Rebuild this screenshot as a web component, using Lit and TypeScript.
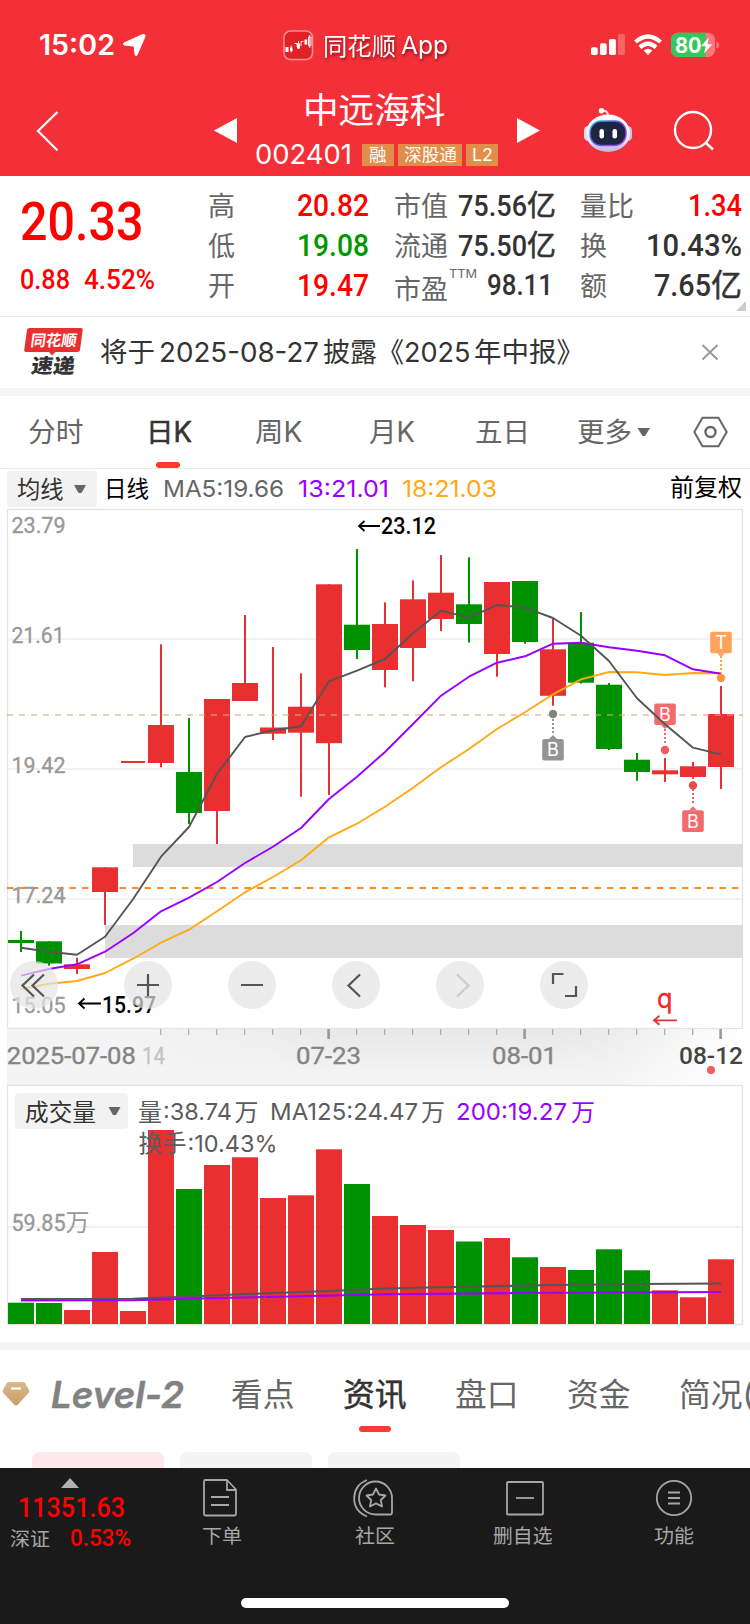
import { LitElement, html, svg, css } from "lit";
import { customElement } from "lit/decorators.js";

/* A single-line label with a fixed advance width: w wide, h tall, baseline at y. */
const label = (text: string, w: number, size: number, y: number, h: number, cls = "") => html`
  <svg class="label ${cls}" width=${w} height=${h} viewBox="0 0 ${w} ${h}">
    <text x="0" y=${y} font-size=${size} textLength=${w} lengthAdjust="spacingAndGlyphs">${text}</text>
  </svg>`;

/* The same kind of label, placed inside a drawing. */
const mark = (text: string, x: number, y: number, w: number, size: number, cls = "") => svg`
  <text class=${cls} x=${x} y=${y} font-size=${size} textLength=${w} lengthAdjust="spacingAndGlyphs">${text}</text>`;

const shared = css`
  svg { display: block; flex: none; overflow: visible; }
  text { fill: currentColor; font-family: Inter, "Noto Sans CJK SC", sans-serif; white-space: pre; }
  .din text, text.din { font-family: Roboto, "Noto Sans CJK SC", sans-serif; font-weight: 500; }
  .light text, text.light { font-weight: 400; stroke: currentColor; stroke-width: 0.35px; }
  .strong text, text.strong { stroke: currentColor; stroke-width: 0.55px; }
  .semi text { font-weight: 600; }
  .red { color: #ff0000; fill: #ff0000; }
  .green { color: #009900; }
  .dark { color: #333; }
  .mid { color: #666; }
  .gray { color: #999; }
  .black { color: #000; }
  .purple { color: #9900ff; }
  .amber { color: #ffaa11; }
  text.red { fill: #e93030; }
`;

const RED = "#e93030";
const GREEN = "#009100";
const cx = (i: number) => 21 + i * 28;

/* colour, body top, body bottom, high, low */
const candles: [string, number, number, number, number][] = [
  ["g", 940, 943, 931, 952], ["g", 941.3, 963.5, 941.3, 965.7], ["r", 964.3, 969, 957.7, 974],
  ["r", 867.3, 892, 867.3, 925], ["r", 761, 763, 761, 763], ["r", 725, 763, 644.3, 767.3],
  ["g", 772, 813, 718, 824], ["r", 699, 811, 699, 844], ["r", 683, 701, 615, 701],
  ["r", 727.5, 733.7, 647, 740], ["r", 706.7, 732.7, 673.3, 796.7], ["r", 584.3, 743.2, 584.3, 795],
  ["g", 624.7, 650, 549, 659], ["r", 624, 670, 602.3, 687.3], ["r", 599.3, 648, 580.3, 681.3],
  ["r", 592.7, 619, 555, 631], ["g", 604.3, 624, 557.3, 642.5], ["r", 582, 654, 582, 676.7],
  ["g", 581, 642, 581, 643.8], ["r", 649.3, 695.8, 618.3, 705.7], ["g", 642.7, 682.7, 612, 683.5],
  ["g", 684.7, 749, 683, 750], ["g", 759.7, 772, 753, 780.8], ["r", 770.3, 774.3, 758, 782],
  ["r", 766.3, 777, 762, 778], ["r", 714, 767, 686, 789],
];
const ma5 = [947.7, 951.7, 954.7, 936.7, 899.3, 856.7, 827, 774, 737, 730.3, 726.3, 681.3, 670.7, 659, 633.3, 610.7, 617.7, 605, 607.7, 618, 635.7, 661, 698.3, 724.3, 747.7, 754.3];
const ma13 = [975.7, 969, 964.3, 951.7, 933.3, 911.3, 897.7, 882, 863, 846.7, 828, 799, 776.7, 752, 724, 695.7, 676.7, 662.7, 656.3, 643.7, 642.7, 647.3, 650.7, 655.3, 669.3, 673.7];
const ma18 = [989, 983.7, 981, 973, 958.7, 942.7, 929.7, 911.3, 892.3, 877, 860.3, 837.3, 823.7, 806.7, 787.7, 767.3, 749, 729, 712.3, 694.3, 679.3, 672, 672.3, 675, 673, 673.3];
const volumes = [1302.7, 1303, 1310, 1252, 1311, 1130, 1189, 1165, 1157.3, 1198, 1195.3, 1149.3, 1184, 1216, 1225, 1230, 1241.5, 1238, 1257.3, 1267, 1270, 1249.3, 1270.3, 1290.3, 1297.3, 1259.3];

const path = (ys: number[]) => ys.map((y, i) => `${cx(i)},${y}`).join(" ");

@customElement("k-chart")
class KChart extends LitElement {
  static styles = [shared, css`
    :host { display: block; }
    .btn { fill: rgba(228, 228, 228, 0.7); }
    .glyph { fill: none; stroke: #555; stroke-width: 2.2; }
    .off { stroke: #ccc; }
    .ma { fill: none; stroke-width: 1.9; stroke-linejoin: round; }
    .stem { fill: none; stroke-width: 1.8; stroke-dasharray: 2 2; }
    .tag { fill: #fff; font-family: Inter, sans-serif; font-size: 18px; text-anchor: middle; }
  `];

  badge(x: number, y: number, letter: string, color: string, up: boolean) {
    return svg`
      <path d=${up ? `M${x - 4} ${y}l4-4 4 4z` : `M${x - 4} ${y + 21.5}l4 4 4-4z`} fill=${color}></path>
      <rect x=${x - 10.8} y=${y} width="21.6" height="21.6" rx="2" fill=${color}></rect>
      <text class="tag" x=${x} y=${y + 17.3}>${letter}</text>`;
  }

  render() {
    return html`<svg width="750" height="520" viewBox="0 509 750 520">
      <rect x="7.5" y="509.5" width="735" height="519" fill="#fff" stroke="#e3e3e3" stroke-width="1.3"></rect>
      ${[639, 769, 899].map((y) => svg`<rect x="8" y=${y - 1} width="734" height="2" fill="#f2f2f2"></rect>`)}
      <rect x="133" y="844" width="610" height="23" fill="#dcdcdc"></rect>
      <rect x="105" y="925" width="638" height="33" fill="#dcdcdc"></rect>
      <path d="M7 888H743" stroke="#ff8a1f" stroke-width="2" stroke-dasharray="6.4 6.1"></path>
      ${mark("23.79", 11.5, 532.7, 54, 22.8, "din gray light")}
      ${mark("21.61", 11.5, 642.7, 53, 22.8, "din gray light")}
      ${mark("19.42", 11.5, 772.7, 54, 22.8, "din gray light")}
      ${mark("17.24", 11.5, 902.7, 54, 22.8, "din gray light")}
      ${mark("15.05", 11.5, 1012.7, 54, 22.8, "din gray light")}
      ${candles.map(([k, t, b, hi, lo], i) => {
        const c = k === "r" ? RED : GREEN;
        const half = i === 4 ? 12 : 13;
        return svg`<rect x=${cx(i) - half} y=${t} width=${half * 2} height=${b - t} fill=${c}></rect>
          <rect x=${cx(i) - 1} y=${hi} width="2" height=${lo - hi} fill=${c}></rect>`;
      })}
      <path d="M7 715H743" stroke="#d3ac70" stroke-opacity=".55" stroke-width="1.9" stroke-dasharray="6 6"></path>
      <polyline class="ma" stroke="#ffaa11" points=${path(ma18)}></polyline>
      <polyline class="ma" stroke="#9900ff" points=${path(ma13)}></polyline>
      ${this.badge(665, 703.4, "B", "#f26c6e", false)}
      <path class="stem" d="M665 729V744" stroke="#f05a5c"></path>
      <circle cx="665" cy="750" r="4.2" fill="#f05a5c"></circle>
      <polyline class="ma" stroke="#555" points=${path(ma5)}></polyline>
      <circle cx="553" cy="714" r="4.2" fill="#828282"></circle>
      <path class="stem" d="M553 719V733" stroke="#888"></path>
      ${this.badge(553, 739, "B", "#949494", true)}
      <circle cx="693" cy="785.4" r="4.2" fill="#ec4c4e"></circle>
      <path class="stem" d="M693 777V805" stroke="#ec4c4e"></path>
      ${this.badge(693, 810.3, "B", "#f26c6e", true)}
      ${this.badge(721, 631.7, "T", "#ffa35c", false)}
      <path class="stem" d="M721 656V673" stroke="#ff9640"></path>
      <circle cx="721" cy="678" r="4.2" fill="#ff9440"></circle>
      <path d="M380 526H359M364.500 521L359 526L364.500 531" fill="none" stroke="#000" stroke-width="1.8"></path>
      ${mark("23.12", 381, 534, 55, 23.6, "din black")}
      <path d="M101 1003.500H79M84.500 998.500L79 1003.500L84.500 1008.500" fill="none" stroke="#000" stroke-width="1.8"></path>
      ${mark("15.97", 102, 1012.7, 54, 23.2, "din black")}
      ${[34, 148, 252, 356, 460, 564].map((x) => svg`<circle class="btn" cx=${x} cy="985" r="24"></circle>`)}
      <g class="glyph">
        <path d="M34 974.500L22.500 985.500L34 996.500M44 974.500L32.500 985.500L44 996.500"></path>
        <path d="M137 985H159M148 974V996M241 985H263"></path>
        <path d="M360 974.500L348.500 985.500L360 996.500"></path>
        <path class="off" d="M457 974.500L468.500 985.500L457 996.500"></path>
        <path d="M553 984V974H563.500M576 986V996H565"></path>
      </g>
      ${mark("q", 657, 1007.7, 15.5, 27, "red light")}
      <path d="M677 1020.300H654M659.500 1015.800L654 1020.300L659.500 1024.800" fill="none" stroke=${RED} stroke-width="1.8"></path>
    </svg>`;
  }
}

@customElement("date-axis")
class DateAxis extends LitElement {
  static styles = [shared, css`
    :host { display: block; }
    .faded { color: #c4c4c4; }
    .label2 { color: #858585; }
    .now { color: #444; }
  `];

  render() {
    const ticks = Array.from({ length: 21 }, (_, i) => 161 + i * 28);
    return html`<svg width="750" height="56" viewBox="0 1029 750 56">
      <defs>
        <linearGradient id="across"><stop offset="0" stop-color="#f4f4f4"></stop><stop offset=".82" stop-color="#f4f4f4"></stop><stop offset="1" stop-color="#fff"></stop></linearGradient>
        <linearGradient id="down" x2="0" y2="1"><stop offset="0" stop-color="#000" stop-opacity=".05"></stop><stop offset=".8" stop-color="#000" stop-opacity="0"></stop></linearGradient>
        <linearGradient id="veil"><stop offset="0" stop-color="#fff" stop-opacity="0"></stop><stop offset=".35" stop-color="#fff"></stop><stop offset=".7" stop-color="#fff"></stop><stop offset="1" stop-color="#fff" stop-opacity="0"></stop></linearGradient>
        <mask id="m"><rect x="130" y="1029" width="613" height="56" fill="url(#veil)"></rect></mask>
      </defs>
      <rect x="7" y="1029" width="736" height="56" fill="url(#across)"></rect>
      <rect x="130" y="1029" width="613" height="56" fill="url(#down)" mask="url(#m)"></rect>
      ${ticks.map((x) => {
        const major = x === 329 || x === 525 || x === 721;
        return svg`<rect x=${x - (major ? 1.7 : 1)} y="1029" width=${major ? 2.6 : 1.2} height=${major ? 10 : 6} fill=${major ? "#999" : "#aaa"}></rect>`;
      })}
      ${mark("2025-07-08", 6.8, 1063.7, 129, 23, "din light label2")}
      ${mark("14", 142, 1063.7, 23, 23, "din light faded")}
      ${mark("07-23", 296, 1063.7, 65, 23, "din light label2")}
      ${mark("08-01", 492, 1063.7, 65, 23, "din light label2")}
      ${mark("08-12", 679, 1063.7, 64, 23, "din now")}
      <circle cx="711" cy="1070" r="4" fill="#f45c5c"></circle>
    </svg>`;
  }
}

@customElement("volume-chart")
class VolumeChart extends LitElement {
  static styles = [shared, css`
    :host { display: block; }
    .avg { fill: none; stroke-width: 2.1; }
    .info { color: #5c5c5c; }
  `];

  render() {
    return html`<svg width="750" height="240" viewBox="0 1085 750 240">
      <rect x="7.5" y="1085.500" width="735" height="239" fill="#fff" stroke="#e3e3e3" stroke-width="1.3"></rect>
      <rect x="8" y="1226" width="734" height="2" fill="#f2f2f2"></rect>
      ${mark("59.85", 11.5, 1230.7, 54, 23, "din light gray")}
      ${mark("万", 65.5, 1231, 24, 24, "gray")}
      ${volumes.map((y, i) => svg`<rect x=${cx(i) - 13} y=${y} width="26" height=${1324 - y} fill=${candles[i][0] === "r" ? RED : GREEN}></rect>`)}
      <polyline class="avg" stroke="#555" points="21,1299 133,1298.8 190,1296.5 245,1294 329,1291 385,1288.500 441,1287.300 553,1285 637,1284 721,1283.500"></polyline>
      <polyline class="avg" stroke="#9900ff" points="21,1300.500 133,1300.300 217,1298 301,1296.300 385,1294.300 525,1293 721,1292"></polyline>
      <rect x="15" y="1093" width="113" height="36" rx="4" fill="#f2f2f2"></rect>
      ${mark("成交量", 25, 1120.5, 71, 23.6, "dark")}
      <path d="M108.500 1107H120.500L116 1115H113Z" fill="#666"></path>
      <g class="info">
        ${mark("量", 138, 1120.5, 24, 24)}${mark(":38.74", 163, 1120.3, 69, 23.5)}${mark("万", 234.5, 1120.5, 24, 24)}
        ${mark("MA125:24.47", 270, 1120.3, 148, 23.5)}${mark("万", 421, 1120.5, 24, 24)}
        ${mark("换手", 138.5, 1152, 48, 24)}${mark(":10.43%", 187.5, 1151.7, 90, 23.5)}
      </g>
      ${mark("200:19.27", 456, 1120.3, 111, 23.5, "purple")}${mark("万", 571, 1120.5, 24, 24, "purple")}
    </svg>`;
  }
}

@customElement("app-root")
class AppRoot extends LitElement {
  static styles = [shared, css`
    :host { display: block; width: 750px; height: 1624px; overflow: hidden; background: #fff; }
    .top { background: #f33038; color: #fff; height: 176px; }
    .status { display: grid; height: 88px; padding-left: 39px; grid-template-columns: 83px 161px 40px 78px 189px 44px 37px 50px; }
    .shadow { filter: drop-shadow(1px 2px 1.5px rgba(90, 0, 0, 0.65)); }
    .nav { display: grid; height: 88px; padding-left: 36px; grid-template-columns: 177px 42px 262px 66px 90px 44px; }
    .title { padding-left: 48px; height: 50px; }
    .code { display: flex; }
    .tags { display: flex; gap: 4px; padding: 6px 0 0 10px; }
    .tag { display: flex; justify-content: center; height: 22px; width: 32px; background: #e28d48; }
    .wide { width: 64px; }

    .quote { display: grid; height: 141px; grid-template-columns: 208px 161px 24.5px 162.5px 24px 162px; border-bottom: 1px solid #ebebeb; box-sizing: border-box; }
    .last { padding-left: 20px; }
    .change { display: flex; gap: 14px; }
    .cells { padding-top: 11px; }
    .cell { display: flex; justify-content: space-between; height: 40px; }
    .val { display: flex; }
    .mid3 { grid-column: 4; }
    .right3 { grid-column: 6; }
    .label3 { display: flex; gap: 1px; }
    .pull { padding-right: 3px; }
    .corner { height: 0; margin: -6px -4px 0 0; display: flex; justify-content: flex-end; }

    .news { display: grid; height: 71px; padding-left: 24px; grid-template-columns: 76px 59px 164px 81px 70px 227px 20px; border-bottom: 8px solid #f4f4f4; }

    .tabs { display: grid; height: 72px; padding-left: 28px; grid-template-columns: 118px 109px 114px 106px 102px 60px 54.5px 36px; border-bottom: 1px solid #ebebeb; }
    .col { display: flex; flex-direction: column; }
    .bar { width: 24px; height: 6px; border-radius: 3px; background: #ff3b30; margin-left: 10px; }
    .legend { display: grid; height: 40px; grid-template-columns: 97px 59px 134.5px 104px 268px 74px; padding-left: 7px; align-items: start; }
    .select { display: flex; gap: 10px; width: 80px; height: 36px; margin-top: 2px; padding-left: 10px; background: #f2f2f2; border-radius: 4px; }

    .band { height: 8px; background: #f4f4f4; margin-top: 17px; }
    .sections { display: grid; height: 102px; overflow: hidden; grid-template-columns: 51px 180px 112px 112px 112px 112px 71px; }
    .level text { font-style: italic; font-weight: 600; fill: #828282; stroke: #828282; stroke-width: 0.5px; }
    .sel { margin-left: 16px; width: 32px; margin-top: 10px; }
    .pills { display: flex; gap: 16px; height: 16px; padding-left: 32px; }
    .pill { width: 132px; border-radius: 8px 8px 0 0; background: #f4f4f4; }
    .on { background: #ffe8e9; }

    .dock { background: #1a1a1a; height: 156px; color: #a6a6a6; display: flex; flex-direction: column; }
    .items { display: grid; height: 130px; grid-template-columns: 202px 151px 140px 161px 95px; }
    .index { display: flex; flex-direction: column; }
    .row { display: flex; gap: 20px; padding-left: 10px; }
    .num { padding-left: 18px; }
    .nudge { padding-left: 2px; }
    .home { width: 268px; height: 10px; border-radius: 5px; background: #fff; margin-left: 241px; }
    .line { fill: none; stroke: #a6a6a6; stroke-width: 1.8; stroke-linejoin: round; }
    .onred { fill: #fff; }
  `];

  statusBar() {
    return html`<div class="status">
      ${label("15:02", 76, 28, 55.3, 88, "semi")}
      <svg width="24" height="88" viewBox="122 0 24 88"><path d="M144 34.500Q145.500 34.500 145 36.500L137 55Q136 57 135 54.500L134.300 46.800Q134 46 133 46L124.500 45Q122 44 124 43L142.500 34.600Z" fill="#fff" stroke="#fff" stroke-width="1"></path></svg>
      <svg width="30" height="88" viewBox="283 0 30 88">
        <rect x="284" y="31" width="28.500" height="28.500" rx="6.500" fill="#e22026" stroke="#f78f90" stroke-width="1.600"></rect>
        <path d="M285.500 47h3v5h-3zM290 47.500h2.500v3.500H290zM297 43.500h3v5h-3zM304.500 39.500h2.700v5h-2.700z" fill="#fff"></path>
        <path d="M291.200 45.500v7M298.500 41v8M294.500 43.500h2.500v3M301 46v-4.500h2.500M309.700 35v13M308.500 37v8.500h2.500V37z" fill="none" stroke="#fff" stroke-width=".9"></path>
      </svg>
      ${label("同花顺", 73, 24.2, 54.5, 88, "shadow")}
      ${label("App", 47, 24.5, 54.3, 88, "shadow")}
      <svg width="36" height="88" viewBox="590 0 36 88" fill="#fff">
        <rect x="591" y="47.300" width="6.700" height="7.700" rx="1.800"></rect><rect x="600" y="43.300" width="6.700" height="11.700" rx="1.800"></rect>
        <rect x="609" y="39" width="6.900" height="16" rx="1.800"></rect><rect x="618" y="34" width="6.900" height="21" rx="1.800" opacity=".25"></rect>
      </svg>
      <svg width="28" height="88" viewBox="634 0 28 88" fill="none" stroke="#fff" stroke-width="4.200">
        <path d="M635.500 42Q648 31 660.500 42M640 47.300Q648 40.300 656 47.300"></path><path d="M648 55L643.700 50.500Q648 47 652.300 50.500Z" fill="#fff" stroke="none"></path>
      </svg>
      <svg width="48" height="88" viewBox="671 0 48 88">
        <rect x="671" y="32.700" width="44" height="24.300" rx="7" fill="#f8787c"></rect>
        <path d="M705.700 32.700H678a7 7 0 0 0-7 7v10.300a7 7 0 0 0 7 7h27.700z" fill="#34c759"></path>
        <path d="M716.500 41.500q2.500 0 2.500 3.400t-2.500 3.400z" fill="#f8787c"></path>
        <text x="675" y="52.500" font-size="21" font-weight="700" textLength="26.5" lengthAdjust="spacingAndGlyphs">80</text>
        <path d="M708.700 37.500L701 46.300H705.700L704 53.500L712.300 44.300H707.500Z" fill="#fff"></path>
      </svg>
    </div>`;
  }

  navBar() {
    return html`<div class="nav">
      <svg width="24" height="88" viewBox="36 88 24 88"><path d="M57.500 112L38 131L57.500 150.500" fill="none" stroke="#fff" stroke-width="2.200"></path></svg>
      <svg width="26" height="88" viewBox="213 88 26 88"><path d="M214 130.500L237 118V143Z" fill="#fff"></path></svg>
      <div>
        <div class="title">${label("中远海科", 142.5, 35.7, 35.4, 50)}</div>
        <div class="code">${label("002401", 97, 26.8, 26, 38)}
          <div class="tags">
            <div class="tag">${label("融", 17.5, 17.5, 17.4, 22)}</div>
            <div class="tag wide">${label("深股通", 53, 17.5, 17.4, 22)}</div>
            <div class="tag">${label("L2", 21, 17.5, 17.4, 22)}</div>
          </div>
        </div>
      </div>
      <svg width="26" height="88" viewBox="517 88 26 88"><path d="M540 130.500L517 118V143Z" fill="#fff"></path></svg>
      <svg width="50" height="88" viewBox="583 88 50 88">
        <defs>
          <linearGradient id="shell" x2="0" y2="1"><stop offset="0" stop-color="#fff"></stop><stop offset=".7" stop-color="#e9e6f8"></stop><stop offset="1" stop-color="#b9b4e0"></stop></linearGradient>
          <linearGradient id="rim" x2="1" y2="1"><stop offset="0" stop-color="#35c8f0"></stop><stop offset=".5" stop-color="#6a4be8"></stop><stop offset="1" stop-color="#b04be8"></stop></linearGradient>
        </defs>
        <path d="M602 111Q608 110 608 116" fill="none" stroke="#e6e3f4" stroke-width="2"></path>
        <circle cx="601.500" cy="110.800" r="2.700" fill="#fff"></circle>
        <rect x="584" y="126" width="9" height="15" rx="4.500" fill="#dcdaf2"></rect><rect x="623" y="126" width="9" height="15" rx="4.500" fill="#c9c5ea"></rect>
        <ellipse cx="608" cy="133.300" rx="22" ry="18.700" fill="url(#shell)"></ellipse>
        <rect x="590" y="121" width="36" height="24.500" rx="11" fill="#1d2540" stroke="url(#rim)" stroke-width="1.300"></rect>
        <rect x="599.500" y="129" width="4.500" height="9.500" rx="2.200" fill="#fff"></rect><rect x="612.500" y="129" width="4.500" height="9.500" rx="2.200" fill="#fff"></rect>
      </svg>
      <svg width="42" height="88" viewBox="673 88 42 88"><g fill="none" stroke="#fff" stroke-width="2.400"><circle cx="693" cy="130" r="18"></circle><path d="M705.500 142.500L713 149.500"></path></g></svg>
    </div>`;
  }

  quote() {
    return html`<div class="quote">
      <div class="last">
        ${label("20.33", 123.5, 53.5, 63.9, 76, "din red")}
        <div class="change">${label("0.88", 50, 27.5, 37, 50, "din red")}${label("4.52%", 71, 27.5, 37, 50, "din red")}</div>
      </div>
      <div class="cells">
        <div class="cell">${label("高", 27, 27, 29.3, 40, "mid")}${label("20.82", 72, 30.8, 29, 40, "din red")}</div>
        <div class="cell">${label("低", 27, 27, 29.3, 40, "mid")}${label("19.08", 72, 30.8, 29, 40, "din green")}</div>
        <div class="cell">${label("开", 27, 27, 29.3, 40, "mid")}${label("19.47", 72, 30.8, 29, 40, "din red")}</div>
      </div>
      <div class="cells mid3">
        <div class="cell">${label("市值", 54, 27, 29.3, 40, "mid")}<div class="val">${label("75.56", 69, 29.5, 29, 40, "din dark")}${label("亿", 29, 29, 29, 40, "dark strong")}</div></div>
        <div class="cell">${label("流通", 54, 27, 29.3, 40, "mid")}<div class="val">${label("75.50", 69, 29.5, 29, 40, "din dark")}${label("亿", 29, 29, 29, 40, "dark strong")}</div></div>
        <div class="cell"><div class="label3">${label("市盈", 54, 27, 31.7, 40, "mid")}${label("TTM", 28, 11.3, 10.9, 40, "mid")}</div><div class="val pull">${label("98.11", 66, 29.5, 28.3, 40, "din dark")}</div></div>
      </div>
      <div class="cells right3">
        <div class="cell">${label("量比", 54, 27, 29.3, 40, "mid")}${label("1.34", 54, 30.8, 29, 40, "din red")}</div>
        <div class="cell">${label("换", 27, 27, 29.3, 40, "mid")}${label("10.43%", 96, 30.8, 29, 40, "din dark")}</div>
        <div class="cell">${label("额", 27, 27, 29.3, 40, "mid")}<div class="val">${label("7.65", 57, 30.8, 28.5, 40, "din dark")}${label("亿", 31, 30.5, 28.5, 40, "dark strong")}</div></div>
        <div class="corner"><svg width="10" height="10" viewBox="0 0 10 10"><path d="M10 0V10H0Z" fill="#ccc"></path></svg></div>
      </div>
    </div>`;
  }

  news() {
    return html`<div class="news dark">
      <svg width="60" height="71" viewBox="24 317 60 71">
        <path d="M29.500 328H81Q83 328 82.700 330L80 350Q79.700 352 77.500 352H55.500L52 355.500L49 352H26Q24 352 24.200 350L27 330Q27.300 328 29.500 328Z" fill="#e93030"></path>
        <g transform="translate(30 346) skewX(-8)" color="#fff"><text x="0" y="0" font-size="15.500" font-weight="700" textLength="46" lengthAdjust="spacingAndGlyphs">同花顺</text></g>
        <g transform="translate(30.500 373.300) skewX(-8)"><text x="0" y="0" font-size="20" font-weight="900" textLength="43.500" lengthAdjust="spacingAndGlyphs">速递</text></g>
      </svg>
      ${label("将于", 55, 27.5, 45.2, 71)}
      ${label("2025-08-27", 160, 27, 44.7, 71)}
      ${label("披露《", 81, 27.5, 45.2, 71)}
      ${label("2025", 66.5, 27, 44.7, 71)}
      ${label("年中报》", 110, 27.5, 45.2, 71)}
      <svg width="18" height="71" viewBox="701 317 18 71"><path d="M702.500 345L717.500 359.500M717.500 345L702.500 359.500" stroke="#999" stroke-width="1.900"></path></svg>
    </div>`;
  }

  tabs() {
    return html`<div class="tabs mid">
      ${label("分时", 55.5, 27.8, 46.4, 72)}
      <div class="col dark">${label("日K", 46, 27.8, 46.4, 66, "strong")}<div class="bar"></div></div>
      ${label("周K", 47.5, 27.8, 46.4, 72)}
      ${label("月K", 46, 27.8, 46.4, 72)}
      ${label("五日", 55, 27.8, 46.4, 72)}
      ${label("更多", 55, 27.8, 46.4, 72)}
      <svg width="13" height="72" viewBox="637 396 13 72"><path d="M637.500 428H650L645 436H642.500Z" fill="#666"></path></svg>
      <svg width="36" height="72" viewBox="691.500 396 36 72"><g fill="none" stroke="#666" stroke-width="2" stroke-linejoin="round"><path d="M702 417.800H718L726.200 432L718 446.200H702L693.800 432Z"></path><circle cx="710" cy="432" r="5" stroke-width="2.400"></circle></g></svg>
    </div>
    <div class="legend">
      <div class="select dark">${label("均线", 46.5, 23.3, 26.7, 36)}<svg width="12" height="36" viewBox="0 0 12 36"><path d="M0 14H12L7.500 22H4.500Z" fill="#666"></path></svg></div>
      ${label("日线", 45, 22.8, 27.7, 40, "black")}
      ${label("MA5:19.66", 121, 23.3, 28, 40, "mid")}
      ${label("13:21.01", 91, 23.3, 28, 40, "purple")}
      ${label("18:21.03", 95, 23.3, 28, 40, "amber")}
      ${label("前复权", 72, 24, 27, 40, "black")}
    </div>`;
  }

  sections() {
    return html`<div class="band"></div>
    <div class="sections mid">
      <svg width="32" height="102" viewBox="0 1350 32 102">
        <defs><linearGradient id="gem" x2="0" y2="1"><stop offset="0" stop-color="#d9b98a"></stop><stop offset="1" stop-color="#c9a06a"></stop></linearGradient></defs>
        <path d="M9 1382H23Q24.500 1382 25.300 1383.200L29 1390Q29.700 1391.500 28.500 1393L17.500 1405Q16 1406.500 14.500 1405L3.300 1393Q2.300 1391.500 3 1390L6.700 1383.200Q7.500 1382 9 1382Z" fill="url(#gem)"></path>
        <path d="M11 1388.500H21" stroke="#fff" stroke-width="2.200"></path>
      </svg>
      ${label("Level-2", 133, 37, 57.7, 102, "level")}
      ${label("看点", 63.5, 31.7, 56.2, 102)}
      <div class="col dark">${label("资讯", 63.5, 31.7, 56.2, 66, "strong")}<div class="bar sel"></div></div>
      ${label("盘口", 63.5, 31.7, 56.2, 102)}
      ${label("资金", 63.5, 31.7, 56.2, 102)}
      ${label("简况(", 75, 31.7, 56.2, 102)}
    </div>
    <div class="pills"><div class="pill on"></div><div class="pill"></div><div class="pill"></div></div>`;
  }

  dock() {
    return html`<div class="dock">
      <div class="items">
        <div class="index">
          <svg width="82" height="20" viewBox="0 1468 82 20"><path d="M61 1488L70 1478L79 1488Z" fill="#b0b0b0"></path></svg>
          <div class="num">${label("11351.63", 107, 27.5, 29, 36, "din red")}</div>
          <div class="row">${label("深证", 40, 19.8, 22.3, 40)}${label("0.53%", 61, 23.3, 22, 40, "din red")}</div>
        </div>
        <div class="col">
          <svg width="40" height="52" viewBox="202 1468 40 52"><path class="line" d="M227 1480H205.500Q204 1480 204 1481.500V1514Q204 1515.500 205.500 1515.500H234.500Q236 1515.500 236 1514V1489.500L227 1480V1490H236M211 1497H229M211 1505H229"></path></svg>
          ${label("下单", 40, 19.8, 23.2, 30)}
        </div>
        <div class="col">
          <svg width="44" height="52" viewBox="353 1468 44 52"><path class="line" d="M367 1480Q354.500 1485 354.200 1498T367 1516.500M376 1514.500A16.500 16.500 0 1 1 392 1498V1513Q392 1514.500 390.500 1514.500ZM376 1488.500L379 1494.500L385.500 1495.500L380.800 1500L382 1506.500L376 1503.400L370 1506.500L371.200 1500L366.500 1495.500L373 1494.500Z"></path></svg>
          <div class="nudge">${label("社区", 40, 19.8, 23.2, 30)}</div>
        </div>
        <div class="col">
          <svg width="60" height="52" viewBox="493 1468 60 52"><rect class="line" x="507" y="1482" width="36" height="32.500" rx="1"></rect><path class="line" d="M516 1498H534"></path></svg>
          ${label("删自选", 59.5, 19.8, 23.2, 30)}
        </div>
        <div class="col">
          <svg width="40" height="52" viewBox="654 1468 40 52"><circle class="line" cx="674" cy="1498" r="17.200"></circle><path class="line" d="M668 1492.500H680M668 1498H680M668 1503.500H680"></path></svg>
          ${label("功能", 40, 19.8, 23.2, 30)}
        </div>
      </div>
      <div class="home"></div>
    </div>`;
  }

  render() {
    return html`
      <div class="top">${this.statusBar()}${this.navBar()}</div>
      ${this.quote()}
      ${this.news()}
      ${this.tabs()}
      <k-chart></k-chart>
      <date-axis></date-axis>
      <volume-chart></volume-chart>
      ${this.sections()}
      ${this.dock()}`;
  }
}
